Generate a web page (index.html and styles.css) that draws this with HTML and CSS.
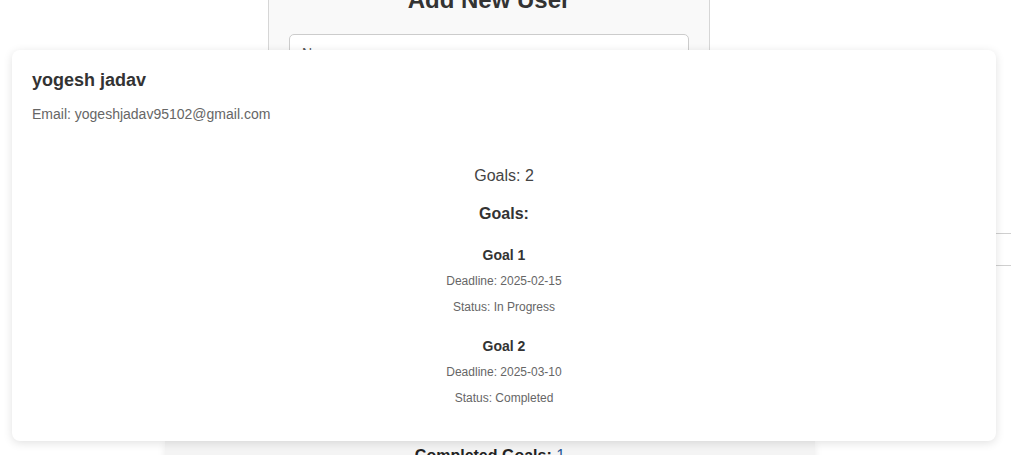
FILE: index.html
```html
<!DOCTYPE html>
<html lang="en">
<head>
<meta charset="utf-8">
<title>Users</title>
<link rel="stylesheet" href="styles.css">
</head>
<body>
<div class="page">
  <section class="form-panel">
    <h2 class="form-title">Add New User</h2>
    <div class="input">Name</div>
  </section>
  <div class="table-rule"></div>
  <section class="stats-panel">
    <p class="stats-line"><strong>Completed Goals:</strong> <span class="stats-num">1</span></p>
  </section>
</div>

<div class="user-card">
  <h3 class="user-name">yogesh jadav</h3>
  <p class="user-email">Email: yogeshjadav95102@gmail.com</p>
  <div class="goals">
    <p class="goals-count">Goals: 2</p>
    <h4 class="goals-title">Goals:</h4>
    <div class="goal">
      <h5 class="goal-name">Goal 1</h5>
      <p class="goal-meta">Deadline: 2025-02-15</p>
      <p class="goal-meta">Status: In Progress</p>
    </div>
    <div class="goal">
      <h5 class="goal-name">Goal 2</h5>
      <p class="goal-meta">Deadline: 2025-03-10</p>
      <p class="goal-meta">Status: Completed</p>
    </div>
  </div>
</div>
</body>
</html>
```
FILE: styles.css
```css
* { box-sizing: border-box; }
html, body { margin: 0; padding: 0; }
body {
  background: #ffffff;
  font-family: "Liberation Sans", Arial, sans-serif;
  color: #333;
  width: 1011px;
  height: 455px;
  overflow: hidden;
  position: relative;
}

.page {
  display: flex;
  flex-direction: column;
  margin-top: -30px;
}

.form-panel {
  width: 442px;
  margin-left: 268px;
  height: 240px;
  background: #f9f9f9;
  border: 1px solid #d6d6d6;
  border-top: none;
  padding: 16px 20px 20px;
  display: flex;
  flex-direction: column;
  align-items: center;
}
.form-title {
  margin: 0 0 20px;
  font-size: 24px;
  line-height: 28px;
  font-weight: bold;
  color: #333;
}
.input {
  width: 400px;
  height: 40px;
  background: #fff;
  border: 1px solid #ccc;
  border-radius: 5px;
  padding: 10px 12px;
  font-size: 14px;
  color: #555;
}

.table-rule {
  margin-top: 23px;
  margin-left: 165px;
  height: 33px;
  border-top: 1px solid #cfcfcf;
  border-bottom: 1px solid #cfcfcf;
}

.stats-panel {
  margin-top: 175px;
  width: 650px;
  margin-left: 165px;
  height: 60px;
  background: #f4f4f4;
  box-shadow: 0 2px 8px rgba(0,0,0,0.08);
  padding-top: 6px;
  text-align: center;
}
.stats-line {
  margin: 0;
  font-size: 16px;
  line-height: 18px;
  color: #222;
}
.stats-num { color: #2c5a9a; }

.user-card {
  position: absolute;
  top: 50px;
  left: 12px;
  width: 984px;
  height: 391px;
  background: #fff;
  border-radius: 8px;
  box-shadow: 0 2px 10px rgba(0,0,0,0.12);
  padding: 20px;
}
.user-name {
  margin: 0;
  font-size: 18px;
  line-height: 21px;
  font-weight: bold;
  color: #333;
}
.user-email {
  margin: 15px 0 0;
  font-size: 14px;
  line-height: 16px;
  color: #666;
}
.goals {
  text-align: center;
  display: flex;
  flex-direction: column;
  align-items: center;
}
.goals-count {
  margin: 45px 0 0;
  font-size: 16px;
  line-height: 18px;
  color: #444;
}
.goals-title {
  margin: 20px 0 0;
  font-size: 16px;
  line-height: 18px;
  font-weight: bold;
  color: #333;
}
.goal {
  margin-top: 24px;
  display: flex;
  flex-direction: column;
  align-items: center;
}
.goal + .goal { margin-top: 24px; }
.goal-name {
  margin: 0;
  font-size: 14px;
  line-height: 16px;
  font-weight: bold;
  color: #333;
}
.goal-meta {
  margin: 11px 0 0;
  font-size: 12px;
  line-height: 14px;
  color: #666;
}
.goal-meta + .goal-meta { margin-top: 12px; }
```
